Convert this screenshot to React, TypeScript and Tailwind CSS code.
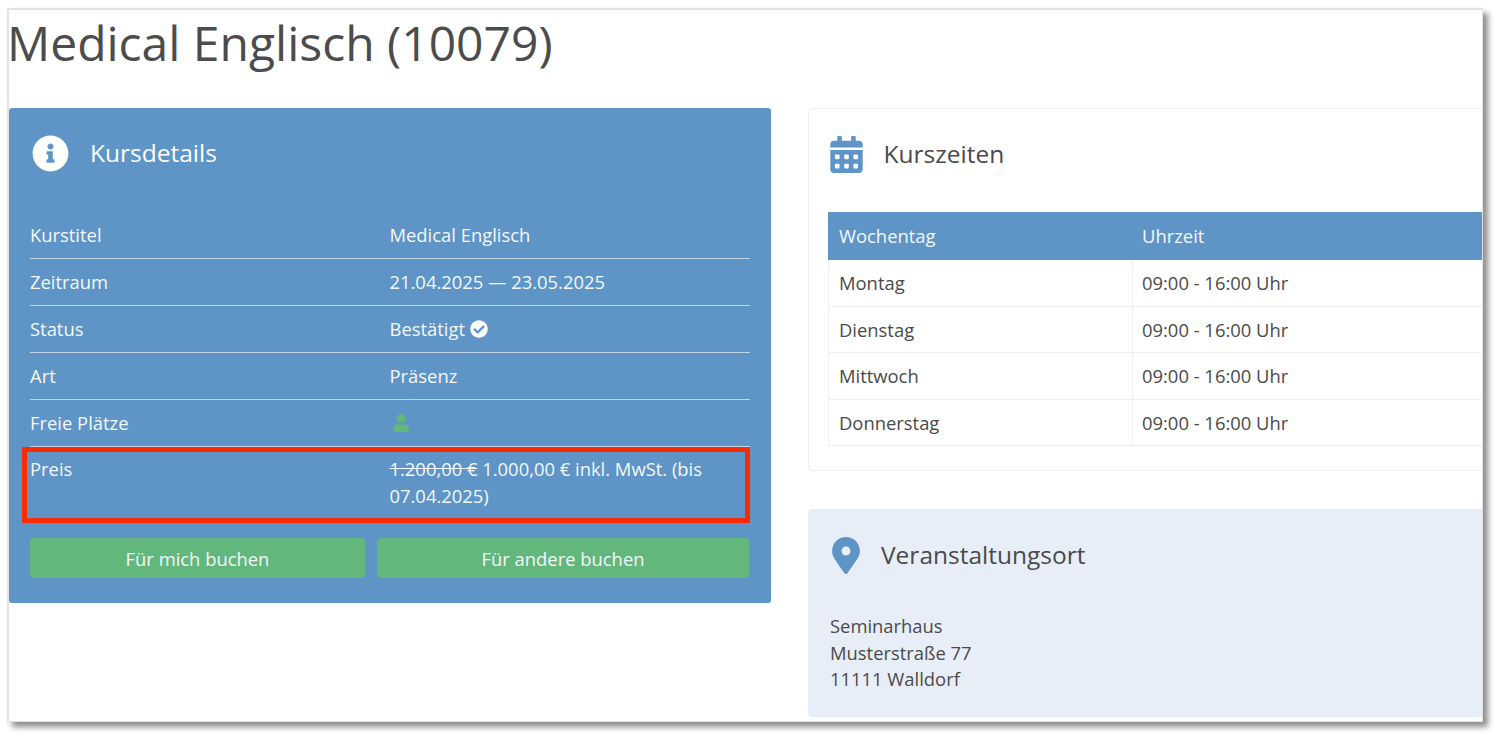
import React from 'react';
import { FaInfoCircle, FaCalendarAlt, FaUser, FaCheckCircle } from 'react-icons/fa';

const times = ['Montag', 'Dienstag', 'Mittwoch', 'Donnerstag'];

const DetailRow: React.FC<{ label: string; children: React.ReactNode; last?: boolean }> = ({ label, children, last }) => (
  <div className={`flex ${last ? 'h-[79px] pt-[8px] leading-[27px]' : 'h-[47px] items-center border-b border-[#c3d6e8]'}`}>
    <div className="w-[359.5px] shrink-0">{label}</div>
    <div className="flex-1">{children}</div>
  </div>
);

const App: React.FC = () => {
  return (
    <div className="h-[745px] w-[1506px] overflow-hidden bg-white pl-[7px] pt-[8px] font-['Open_Sans',sans-serif] text-[18.4px] text-[#4a4a4a]">
      <div className="relative h-[714px] w-[1476px] overflow-hidden border-2 border-r-[1px] border-b-[1px] border-[#e2e2e2] bg-white shadow-[5px_5px_6px_rgba(0,0,0,0.45)]">
        <h1 className="-ml-[2px] h-[98px] pt-[1px] text-[48px] leading-[64px] text-[#4c4c4c]">Medical Englisch (10079)</h1>

        <div className="flex items-start gap-[37px]">
          <div className="w-[762px] shrink-0 rounded-[3px] bg-[#5e94c6] px-[21px] pb-[25px] text-[#f4f8fb]">
            <div className="flex h-[104px] items-center pb-[13px] pl-[2px]">
              <FaInfoCircle className="size-[37px] text-white" />
              <span className="ml-[21px] text-[24.5px] text-white">Kursdetails</span>
            </div>
            <DetailRow label="Kurstitel">Medical Englisch</DetailRow>
            <DetailRow label="Zeitraum">21.04.2025 — 23.05.2025</DetailRow>
            <DetailRow label="Status">
              <span className="inline-flex items-center gap-[5px]">
                Bestätigt <FaCheckCircle className="size-[18px] text-white" />
              </span>
            </DetailRow>
            <DetailRow label="Art">Präsenz</DetailRow>
            <DetailRow label="Freie Plätze">
              <FaUser className="ml-[2px] size-[18px] text-[#62b77c]" />
            </DetailRow>
            <DetailRow label="Preis" last>
              <span className="line-through">1.200,00 €</span> 1.000,00 € inkl. MwSt. (bis 07.04.2025)
            </DetailRow>
            <div className="mt-[12px] flex gap-[12px]">
              <button className="h-[40px] w-[335px] rounded-[4px] bg-[#62b77c] pt-[1px] text-center text-[#f4f8fb]">Für mich buchen</button>
              <button className="h-[40px] w-[372px] rounded-[4px] bg-[#62b77c] pt-[1px] text-center text-[#f4f8fb]">Für andere buchen</button>
            </div>
          </div>

          <div className="w-[720px] shrink-0">
            <div className="h-[363px] rounded-[4px] border border-[#eeeff2] pl-[19px]">
              <div className="flex h-[103px] items-center pb-[13px]">
                <FaCalendarAlt className="size-[37px] text-[#5e94c6]" />
                <span className="ml-[18.5px] text-[24.5px]">Kurszeiten</span>
              </div>
              <div className="flex h-[48.2px] items-center bg-[#5e94c6] text-[#f4f8fb]">
                <div className="w-[304px] pl-[11px]">Wochentag</div>
                <div className="pl-[10px]">Uhrzeit</div>
              </div>
              {times.map((day) => (
                <div key={day} className="flex h-[46.5px] items-center border-b border-l border-[#eeeff2]">
                  <div className="flex h-full w-[304px] items-center border-r border-[#eeeff2] pl-[10px]">{day}</div>
                  <div className="pl-[9px]">09:00 - 16:00 Uhr</div>
                </div>
              ))}
            </div>
            <div className="mt-[38px] h-[208px] rounded-[4px] bg-[#e8eef7] pl-[22px]">
              <div className="flex h-[95px] items-center pb-[3px] pl-[2px]">
                <svg viewBox="0 0 384 512" className="h-[37px] w-[28px] text-[#5e94c6]">
                  <path
                    fill="currentColor"
                    fillRule="evenodd"
                    d="M172.268 501.67C26.97 291.031 0 269.413 0 192 0 85.961 85.961 0 192 0s192 85.961 192 192c0 77.413-26.97 99.031-172.268 309.67-9.535 13.774-29.93 13.773-39.464 0zM192 254c34 0 62-28 62-62s-28-62-62-62-62 28-62 62 28 62 62 62z"
                  />
                </svg>
                <span className="ml-[21px] text-[24.5px]">Veranstaltungsort</span>
              </div>
              <div className="mt-[9px] leading-[26.5px]">
                Seminarhaus
                <br />
                Musterstraße 77
                <br />
                11111 Walldorf
              </div>
            </div>
          </div>
        </div>

        <div className="absolute left-[13px] top-[437px] h-[76px] w-[728px] border-[5px] border-[#f82b05]" />
      </div>
    </div>
  );
};

export default App;
